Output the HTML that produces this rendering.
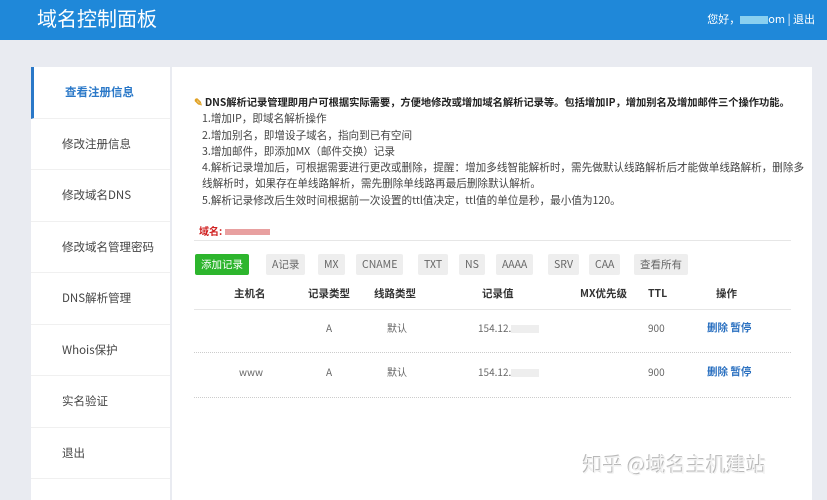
<!DOCTYPE html>
<html><head><meta charset="utf-8"><style>
*{margin:0;padding:0;box-sizing:border-box}
body{width:827px;height:500px;overflow:hidden;background:#e9ebf1;font-family:"Noto Sans CJK SC","Liberation Sans",sans-serif;position:relative;color:#333}
.hd{position:absolute;left:0;top:0;width:827px;height:40px;background:#1f88d9}
.hd .t{position:absolute;left:37px;top:4px;font-size:20px;line-height:28px;color:#fff}
.hd .r{position:absolute;right:12px;top:11px;font-size:11px;line-height:16px;color:#fff}
.side{position:absolute;left:31px;top:67px;width:139px;height:433px;background:#fff}
.side div{height:51.5px;line-height:51px;border-bottom:1px solid #f0f0f0;font-size:11.5px;color:#444;padding-left:31px}
.side .a{color:#2a78c8;font-weight:bold;border-left:3px solid #2a78c8;padding-left:31px}
.main{position:absolute;left:172px;top:67px;width:640px;height:433px;background:#fff}
.intro{position:absolute;left:22px;top:27px;font-size:10.6px;line-height:16.3px;color:#444;white-space:nowrap}
.intro b{color:#222;font-size:10.3px;letter-spacing:-0.05px}
.dom{position:absolute;left:27px;top:157px;font-size:10px;line-height:14px;color:#d02020;font-weight:bold}
.line{position:absolute;left:22px;width:597px;border-top:1px solid #e6e6e6}
.btn{position:absolute;top:187px;height:21px;line-height:21px;font-size:10.5px;background:#eeeeee;color:#666;padding:0 6px;border-radius:2px}
.g{background:#2db52d;color:#fff}
.th{position:absolute;top:219px;line-height:16px;font-size:10.5px;font-weight:bold;color:#333}
.td{position:absolute;font-size:10px;line-height:14px;color:#666}
.op{color:#2a70c0;font-weight:bold;font-size:10.5px}
.dot{position:absolute;left:22px;width:597px;border-top:1px dotted #ccc}
.wm{position:absolute;left:583px;top:450px;font-size:20px;line-height:28px;color:#f2f2f2;text-shadow:-1px -1px 0 #b8b8b8}
.blur{display:inline-block;background:#ddd;height:8px;vertical-align:middle}
</style></head><body>
<div class="hd"><div class="t">域名控制面板</div><div class="r">您好，<span class="blur" style="width:28px;background:#8ad0f0"></span>om | 退出</div></div>
<div class="side">
<div class="a">查看注册信息</div><div>修改注册信息</div><div>修改域名DNS</div><div>修改域名管理密码</div><div>DNS解析管理</div><div>Whois保护</div><div>实名验证</div><div>退出</div>
</div>
<div class="main">
<div class="intro"><b><span style="color:#e0a020">✎</span> DNS解析记录管理即用户可根据实际需要，方便地修改或增加域名解析记录等。包括增加IP，增加别名及增加邮件三个操作功能。</b><br>
<span style="padding-left:8px">1.增加IP，即域名解析操作</span><br>
<span style="padding-left:8px">2.增加别名，即增设子域名，指向到已有空间</span><br>
<span style="padding-left:8px">3.增加邮件，即添加MX（邮件交换）记录</span><br>
<span style="padding-left:8px">4.解析记录增加后，可根据需要进行更改或删除，提醒：增加多线智能解析时，需先做默认线路解析后才能做单线路解析，删除多</span><br>
<span style="padding-left:8px">线解析时，如果存在单线路解析，需先删除单线路再最后删除默认解析。</span><br>
<span style="padding-left:8px">5.解析记录修改后生效时间根据前一次设置的ttl值决定，ttl值的单位是秒，最小值为120。</span></div>
<div class="dom">域名: <span class="blur" style="width:45px;background:#e8a0a0;height:6px"></span></div>
<div class="line" style="top:173px"></div>
<div class="btn g" style="left:23px">添加记录</div>
<div class="btn" style="left:94px">A记录</div>
<div class="btn" style="left:146px">MX</div>
<div class="btn" style="left:184px">CNAME</div>
<div class="btn" style="left:246px">TXT</div>
<div class="btn" style="left:287px">NS</div>
<div class="btn" style="left:324px">AAAA</div>
<div class="btn" style="left:376px">SRV</div>
<div class="btn" style="left:417px">CAA</div>
<div class="btn" style="left:462px">查看所有</div>
<div class="th" style="left:62px">主机名</div>
<div class="th" style="left:136px">记录类型</div>
<div class="th" style="left:202px">线路类型</div>
<div class="th" style="left:310px">记录值</div>
<div class="th" style="left:408px">MX优先级</div>
<div class="th" style="left:476px">TTL</div>
<div class="th" style="left:544px">操作</div>
<div class="line" style="top:242px"></div>
<div class="td" style="left:154px;top:254px">A</div><div class="td" style="left:215px;top:254px">默认</div><div class="td" style="left:306px;top:254px">154.12.<span class="blur" style="width:28px;background:#eee"></span></div><div class="td" style="left:476px;top:254px">900</div><div class="td op" style="left:535px;top:254px">删除 暂停</div>
<div class="dot" style="top:285px"></div>
<div class="td" style="left:67px;top:298px">www</div><div class="td" style="left:154px;top:298px">A</div><div class="td" style="left:215px;top:298px">默认</div><div class="td" style="left:306px;top:298px">154.12.<span class="blur" style="width:28px;background:#eee"></span></div><div class="td" style="left:476px;top:298px">900</div><div class="td op" style="left:535px;top:298px">删除 暂停</div>
<div class="dot" style="top:330px"></div>
</div>
<div class="wm">知乎 @域名主机建站</div>
</body></html>
